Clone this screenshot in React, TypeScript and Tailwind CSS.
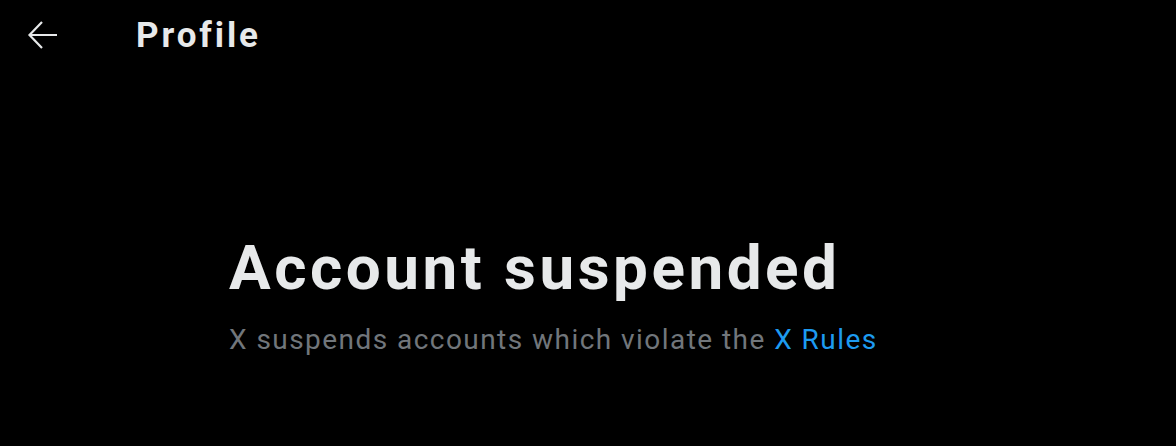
import React from "react";

export default function App() {
  return (
    <div className="w-[1176px] h-[446px] bg-black text-[#e7e9ea]" style={{ fontFamily: "Roboto, 'Noto Sans', sans-serif" }}>
      <div className="flex items-center h-[70px] pl-[27px]">
        <svg width="32" height="30" viewBox="0 0 32 30" fill="none" stroke="#e7e9ea" strokeWidth="2.2" strokeLinecap="butt" strokeLinejoin="miter">
          <path d="M3 15H30M15 2L2.5 15 15 28" />
        </svg>
        <div className="ml-[77px] text-[35px] font-bold leading-none tracking-[2.9px]">Profile</div>
      </div>
      <div className="pl-[229px] pt-[167px]">
        <div className="text-[62px] font-bold leading-none tracking-[3.5px]">Account suspended</div>
        <div className="mt-[27px] text-[28px] leading-none tracking-[1.45px] text-[#71767b]">
          X suspends accounts which violate the <span className="text-[#1d9bf0]">X Rules</span>
        </div>
      </div>
    </div>
  );
}
